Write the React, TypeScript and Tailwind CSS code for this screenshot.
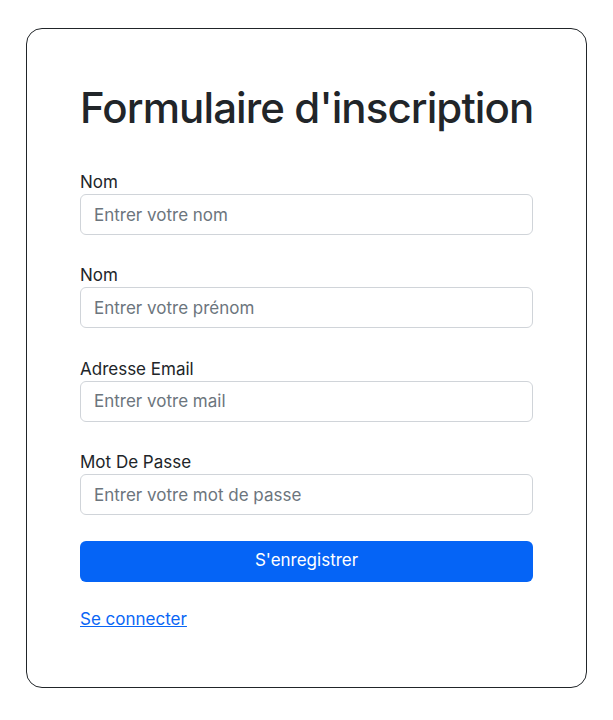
import React from 'react';

const fields = [
  { label: 'Nom', placeholder: 'Entrer votre nom', type: 'text' },
  { label: 'Nom', placeholder: 'Entrer votre prénom', type: 'text' },
  { label: 'Adresse Email', placeholder: 'Entrer votre mail', type: 'email' },
  { label: 'Mot De Passe', placeholder: 'Entrer votre mot de passe', type: 'password' },
];

const App: React.FC = () => {
  return (
    <div className="min-h-screen bg-white pt-[28px] text-[#212529]" style={{ fontFamily: 'Inter, "Liberation Sans", sans-serif' }}>
      <div className="mx-auto w-[561px] rounded-[16px] border border-[#212529] px-[53px] pt-[53px] pb-[55px]">
        <h1 className="mb-[38px] whitespace-nowrap text-[42px] font-medium leading-[52px] tracking-[-0.9px]">Formulaire d'inscription</h1>
        <form onSubmit={(e) => e.preventDefault()} className="flex flex-col gap-[30.4px]">
          {fields.map((f, i) => (
            <div key={i}>
              <label className="mb-[2px] block text-[17px] leading-[20px]">{f.label}</label>
              <input
                type={f.type}
                placeholder={f.placeholder}
                className="block h-[41px] w-full rounded-[6px] border border-[#d0d4d9] px-[13px] text-[17px] outline-none placeholder:text-[#6c757d]"
              />
            </div>
          ))}
          <button
            type="submit"
            className="-mt-[5px] block h-[41px] w-full rounded-[6px] bg-[#0564f6] text-[17px] text-white"
          >
            S'enregistrer
          </button>
        </form>
        <a href="#" className="mt-[24px] block w-fit text-[17px] leading-[26px] text-[#0a66f5] underline">Se connecter</a>
      </div>
    </div>
  );
};

export default App;
